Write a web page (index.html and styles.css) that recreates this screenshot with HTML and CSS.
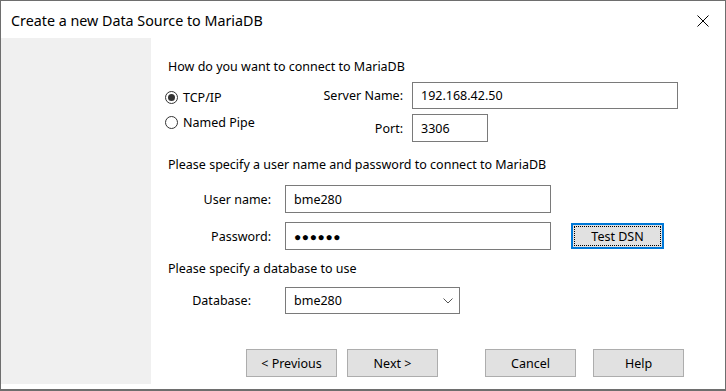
FILE: index.html
```html
<!DOCTYPE html>
<html>
<head>
    <title>Create a new Data Source to MariaDB</title>
    <link rel="stylesheet" href="styles.css">
</head>
<body>
    <div class="window">
        <div class="titlebar">
            <span class="title">Create a new Data Source to MariaDB</span>
            <svg class="close" width="12" height="12" viewBox="0 0 12 12">
                <path d="M0.5 0.5 L11.5 11.5 M11.5 0.5 L0.5 11.5" stroke="#000" stroke-width="1" fill="none"/>
            </svg>
        </div>
        <div class="main">
            <div class="sidebar"></div>
            <div class="content">
                <p class="heading">How do you want to connect to MariaDB</p>
                <div class="connect">
                    <div class="radios">
                        <label class="radio"><span class="dot checked"></span>TCP/IP</label>
                        <label class="radio"><span class="dot"></span>Named Pipe</label>
                    </div>
                    <div class="server-grid">
                        <span class="label">Server Name:</span>
                        <div class="field server">192.168.42.50</div>
                        <span class="label">Port:</span>
                        <div class="field port">3306</div>
                    </div>
                </div>

                <p class="heading second">Please specify a user name and password to connect to MariaDB</p>
                <div class="row">
                    <span class="row-label">User name:</span>
                    <div class="field wide">bme280</div>
                </div>
                <div class="row password-row">
                    <span class="row-label">Password:</span>
                    <div class="field wide dots">&#9679;&#9679;&#9679;&#9679;&#9679;&#9679;</div>
                    <button class="btn default"><span class="focus">Test DSN</span></button>
                </div>

                <p class="heading third">Please specify a database to use</p>
                <div class="row">
                    <span class="row-label db-label">Database:</span>
                    <div class="field select">
                        <span>bme280</span>
                        <svg width="10" height="6" viewBox="0 0 10 6">
                            <path d="M0.5 0.5 L5 5 L9.5 0.5" stroke="#555" stroke-width="1" fill="none"/>
                        </svg>
                    </div>
                </div>

                <div class="buttons">
                    <button class="btn">&lt; Previous</button>
                    <button class="btn">Next &gt;</button>
                    <button class="btn cancel">Cancel</button>
                    <button class="btn help">Help</button>
                </div>
            </div>
        </div>
    </div>
</body>
</html>
```

FILE: styles.css
```css
body {
    margin: 0;
    font-family: "Noto Sans", "Open Sans", sans-serif;
    font-size: 12.5px;
    color: #000;
    background-color: #fff;
}
.window {
    width: 726px;
    height: 391px;
    box-sizing: border-box;
    border: 1px solid #6e6e6e;
    border-bottom-width: 2px;
    background-color: #fff;
    display: flex;
    flex-direction: column;
}
.titlebar {
    height: 37px;
    flex-shrink: 0;
    display: flex;
    align-items: center;
    justify-content: space-between;
    padding: 0 16px 0 10px;
}
.title {
    font-size: 14.3px;
    margin-top: 2px;
}
.close {
    margin-top: 3px;
}
.main {
    flex: 1;
    display: flex;
    padding-bottom: 5px;
}
.sidebar {
    width: 150px;
    background-color: #f0f0f0;
}
.content {
    flex: 1;
    padding: 21px 0 0 17px;
}
.heading {
    margin: 0;
    line-height: 16px;
}
.heading.second {
    margin-top: 15px;
}
.heading.third {
    margin-top: 11px;
}

/* connection type */
.connect {
    display: flex;
    margin-top: 7px;
}
.radios {
    width: 140px;
    margin-left: -3px;
    padding-top: 3px;
}
.radio {
    display: flex;
    align-items: center;
    height: 25px;
    gap: 5px;
}
.dot {
    width: 13px;
    height: 13px;
    box-sizing: border-box;
    border: 1px solid #333;
    border-radius: 50%;
    display: flex;
    align-items: center;
    justify-content: center;
}
.dot.checked::after {
    content: "";
    width: 7px;
    height: 7px;
    border-radius: 50%;
    background-color: #333;
}
.server-grid {
    display: grid;
    grid-template-columns: 107px auto;
    row-gap: 5px;
    align-items: center;
}
.label {
    text-align: right;
    padding-right: 9px;
}
.field {
    box-sizing: border-box;
    height: 27px;
    border: 1px solid #7a7a7a;
    padding: 0 8px;
    display: flex;
    align-items: center;
    background-color: #fff;
}
.server {
    width: 266px;
}
.port {
    width: 76px;
    height: 28px;
}

/* credentials */
.row {
    display: flex;
    align-items: center;
    margin-top: 9px;
}
.heading + .row {
    margin-top: 12px;
}
.heading.third + .row {
    margin-top: 10px;
}
.row-label {
    width: 117px;
    box-sizing: border-box;
    padding-right: 14px;
    text-align: right;
}
.db-label {
    padding-right: 34px;
}
.field.wide {
    width: 266px;
    height: 28px;
}
.dots {
    font-size: 12px;
    letter-spacing: 0.6px;
}
.btn {
    font-family: inherit;
    font-size: 12.5px;
    width: 91px;
    height: 28px;
    background-color: #e1e1e1;
    border: 1px solid #adadad;
    padding: 0;
    color: #000;
}
.btn.default {
    width: 93px;
    height: 26px;
    margin-left: 20px;
    border: 2px solid #0078d7;
    padding: 1px;
}
.focus {
    display: flex;
    align-items: center;
    justify-content: center;
    height: 100%;
    border: 1px dotted #000;
    box-sizing: border-box;
}
.select {
    width: 175px;
    justify-content: space-between;
    padding-right: 6px;
}

/* wizard buttons */
.buttons {
    display: flex;
    margin: 35px 0 0 78px;
    gap: 10px;
}
.btn.cancel {
    margin-left: 37px;
}
.btn.help {
    margin-left: 7px;
}
```
